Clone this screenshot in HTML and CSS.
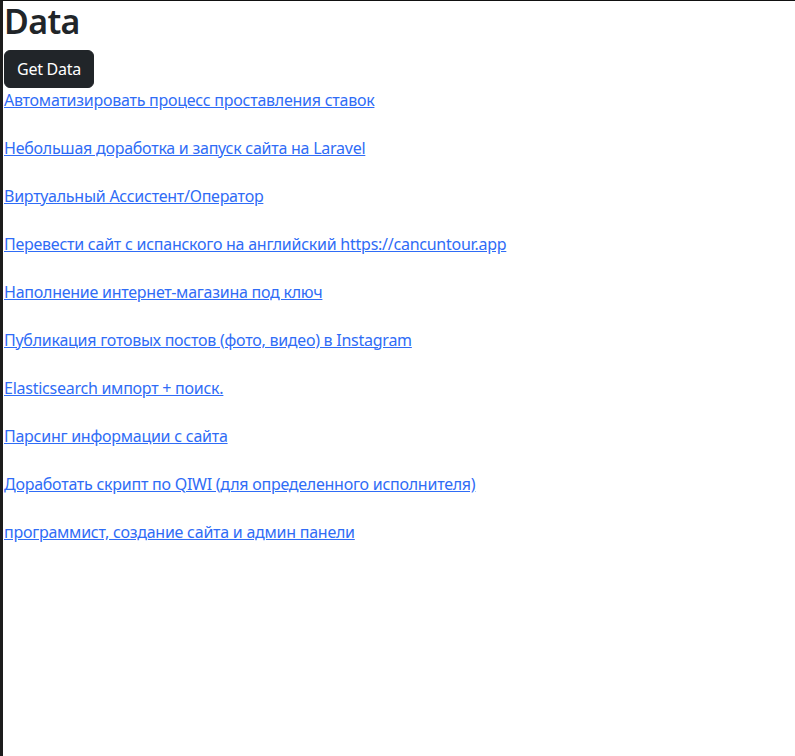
FILE: index.html
```html
<!DOCTYPE html>
<html lang="ru">
<head>
<meta charset="utf-8">
<title>Data</title>
<link rel="stylesheet" href="styles.css">
</head>
<body>
<div class="frame">
  <h1 class="title">Data</h1>
  <button class="btn-dark" type="button">Get Data</button>
  <div class="list">
    <a href="#">Автоматизировать процесс проставления ставок</a>
    <a href="#">Небольшая доработка и запуск сайта на Laravel</a>
    <a href="#">Виртуальный Ассистент/Оператор</a>
    <a href="#">Перевести сайт с испанского на английский https://cancuntour.app</a>
    <a href="#">Наполнение интернет-магазина под ключ</a>
    <a href="#">Публикация готовых постов (фото, видео) в Instagram</a>
    <a href="#">Elasticsearch импорт + поиск.</a>
    <a href="#">Парсинг информации с сайта</a>
    <a href="#">Доработать скрипт по QIWI (для определенного исполнителя)</a>
    <a href="#">программист, создание сайта и админ панели</a>
  </div>
</div>
</body>
</html>
```
FILE: styles.css
```css
html, body {
  margin: 0;
  padding: 0;
  background: #fff;
}
body {
  font-family: "Noto Sans", "Open Sans", sans-serif;
  font-size: 16px;
  line-height: 1.5;
  color: #212529;
}
.frame {
  min-height: 756px;
  border-top: 1px solid #111;
  border-left: 3px solid #1c1c1c;
  padding-left: 1px;
  box-sizing: border-box;
}
.title {
  margin: 0 0 8px;
  font-size: 33.9px;
  font-weight: 600;
  line-height: 1.2;
  letter-spacing: -0.6px;
}
.btn-dark {
  display: block;
  font-family: inherit;
  font-size: 16px;
  line-height: 24px;
  padding: 6px 12px;
  letter-spacing: -0.25px;
  color: #fff;
  background: #212529;
  border: 1px solid #212529;
  border-radius: 6px;
}
.list {
  display: flex;
  flex-direction: column;
  align-items: flex-start;
  gap: 24px;
  letter-spacing: -0.25px;
}
.list a {
  color: #2f6cf6;
  text-decoration: underline;
}
```
